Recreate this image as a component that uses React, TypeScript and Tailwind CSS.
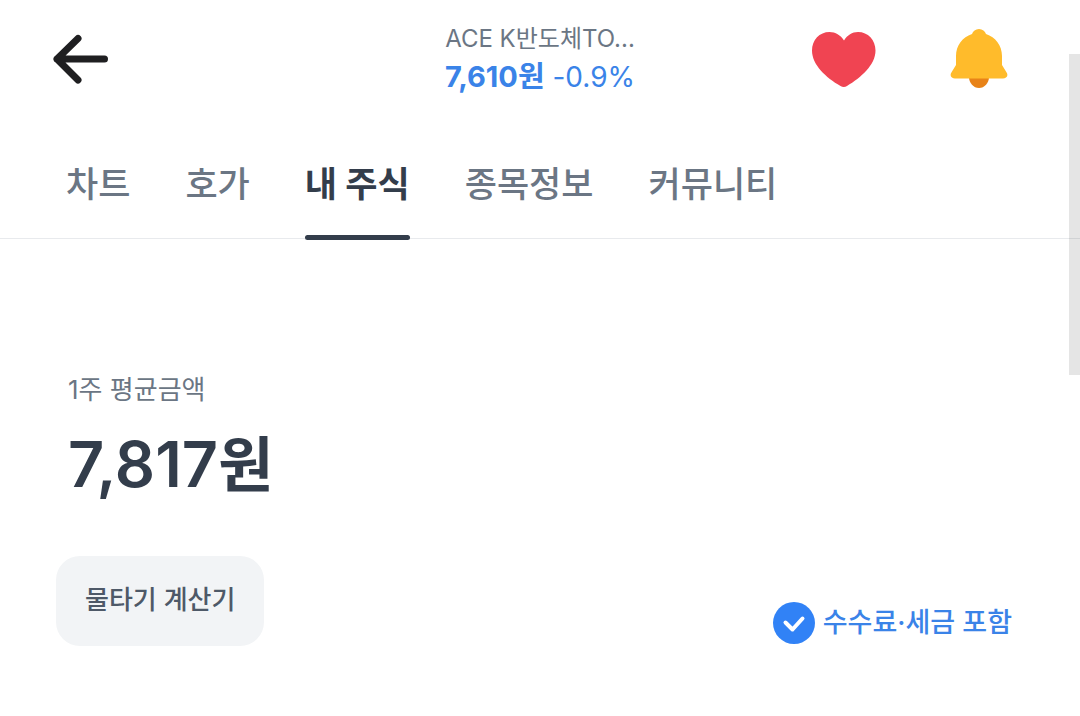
import { useState } from "react";

const tabs = ["차트", "호가", "내 주식", "종목정보", "커뮤니티"];

function BackIcon() {
  return (
    <svg width="56" height="52" viewBox="0 0 56 52" fill="none" stroke="#1f1f21" strokeWidth="7" strokeLinecap="round" strokeLinejoin="round" aria-hidden="true">
      <path d="M26 5.500 5 26l21 21M5 26h47.500" />
    </svg>
  );
}

function HeartIcon() {
  return (
    <svg width="64" height="56" viewBox="0 0 64 56" fill="#f04452" aria-hidden="true">
      <path d="M32 9.500C28.500 4 23.500 1 17.500 1 7.500 1 0 9 0 19.500 0 34 14 46.500 28.500 55c2 1.300 4.500 1.300 6.500 0C49 46.500 63.500 34 63.500 19.500 63.500 9 56 1 46 1 40 1 35.500 4 32 9.500Z" />
    </svg>
  );
}

function BellIcon() {
  return (
    <svg width="58" height="60" viewBox="0 0 58 60" aria-hidden="true">
      <path d="M19 48h20c0 6-4.500 11-10 11s-10-5-10-11Z" fill="#e88318" />
      <path d="M29 0c3.500 0 6 2.200 7 5C45.500 8 52 16.500 52 27v9l4.300 7c2.800 4-.3 6.500-3.300 6.500H5c-3 0-6.100-2.500-3.300-6.500L6 36v-9C6 16.500 12.500 8 22 5c1-2.800 3.500-5 7-5Z" fill="#ffbb2b" />
    </svg>
  );
}

export default function App() {
  const [active, setActive] = useState("내 주식");
  const [liked, setLiked] = useState(true);
  const [includeFee, setIncludeFee] = useState(true);

  return (
    <div className="relative min-h-screen bg-white font-['Inter','Noto_Sans_CJK_KR',sans-serif] text-[#333d4b]">
      <header className="grid grid-cols-[1fr_auto_1fr] items-center px-[52px] pt-[21px]">
        <button aria-label="뒤로" className="justify-self-start">
          <BackIcon />
        </button>
        <div className="text-center">
          <h1 className="text-[24px] leading-9 font-normal text-[#6b7684]">ACE K반도체TO...</h1>
          <p className="text-[28px] leading-10 text-[#3a83e8]">
            <strong className="text-[29px] font-bold">7,610원</strong> -0.9%
          </p>
        </div>
        <div className="flex items-center gap-[74px] justify-self-end pr-5">
          <button aria-label="관심" aria-pressed={liked} onClick={() => setLiked(!liked)}>
            <HeartIcon />
          </button>
          <button aria-label="알림">
            <BellIcon />
          </button>
        </div>
      </header>

      {/* 탭 */}
      <nav className="mt-[47px] flex gap-[55px] border-b border-[#e8eaed] px-[66px]">
        {tabs.map((tab) => (
          <button
            key={tab}
            onClick={() => setActive(tab)}
            className={`flex flex-col text-[35px] leading-[80px] ${tab === active ? "font-bold text-[#333d4b]" : "font-medium text-[#6b7684]"}`}
          >
            {tab}
            <span className={`mt-[11px] -mb-0.5 h-[5px] w-full rounded-full ${tab === active ? "bg-[#333d4b]" : ""}`} />
          </button>
        ))}
      </nav>

      <main className="px-14 pt-[131px]">
        <div className="pl-3">
          <p className="text-[26px] leading-10 text-[#6b7684]">1주 평균금액</p>
          <p className="mt-[14px] text-[63px] leading-[80px] font-semibold">
            7,817<span className="text-[60px]">원</span>
          </p>
        </div>
        <div className="mt-[51px] flex items-center justify-between">
          <button className="h-[90px] rounded-3xl bg-[#f2f4f6] px-[29px] pb-1 text-[26px] font-medium text-[#4e5968]">
            물타기 계산기
          </button>
          <label className="mt-11 mr-3 flex items-center gap-2 text-[27px] leading-10 font-medium text-[#3a83e8]">
            <span className="grid">
              <input
                type="checkbox"
                checked={includeFee}
                onChange={(e) => setIncludeFee(e.target.checked)}
                className="col-start-1 row-start-1 size-[42px] appearance-none rounded-full bg-[#b0b8c1] checked:bg-[#3182f6]"
              />
              <svg className="pointer-events-none col-start-1 row-start-1" width="42" height="42" viewBox="0 0 42 42" fill="none" stroke="white" strokeWidth="4" strokeLinecap="round" strokeLinejoin="round" aria-hidden="true">
                <path d="m12.500 20.500 7 7 10-11" />
              </svg>
            </span>
            수수료·세금 포함
          </label>
        </div>
      </main>

      {/* 스크롤 표시 */}
      <div className="absolute top-[54px] right-0 h-[321px] w-[11px] bg-black/10" />
    </div>
  );
}
